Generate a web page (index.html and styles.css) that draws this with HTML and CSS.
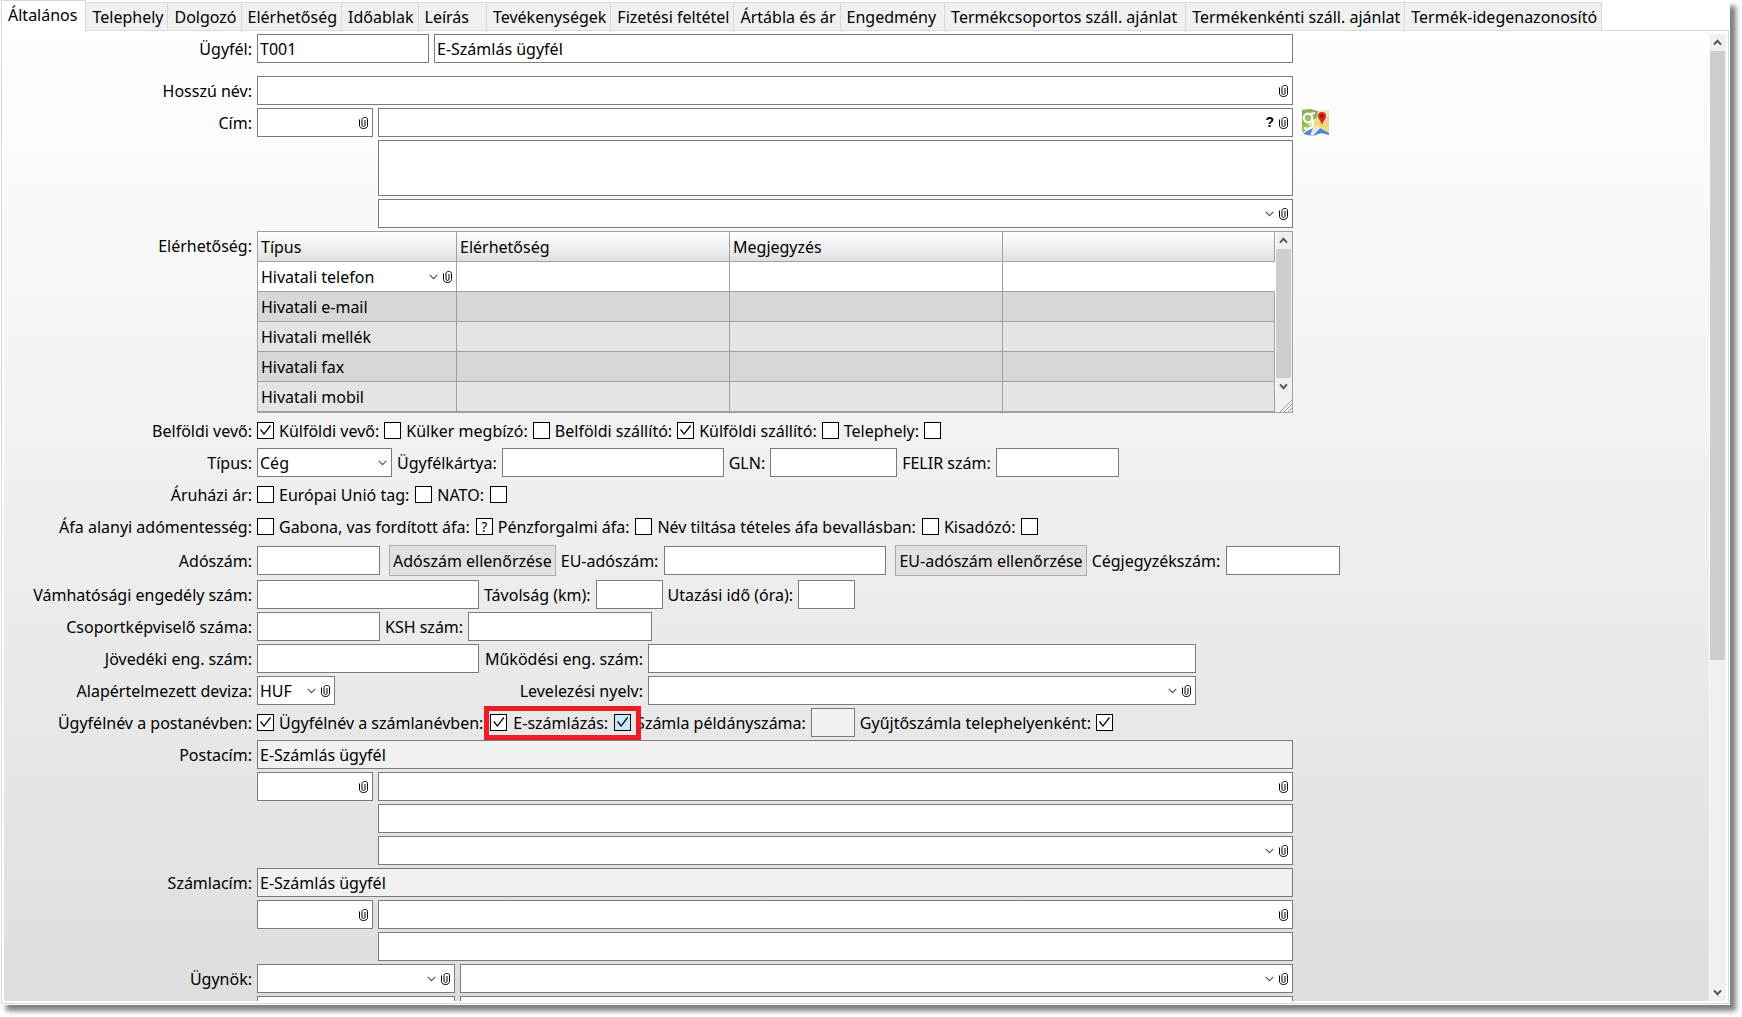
FILE: index.html
```
<!DOCTYPE html>
<html lang="hu">
<head>
    <meta charset="UTF-8">
    <meta name="viewport" content="width=device-width, initial-scale=1.0">
    <title>Ügyfél - E-Számlás ügyfél</title>
    <link rel="stylesheet" href="styles.css">
</head>
<body>
    <!-- Shared icons -->
    <svg class="sprite" aria-hidden="true">
        <symbol id="clip" viewBox="0 0 9 12">
            <path d="M.5 2.500v6c0 4 8 4 8 0v-6c0-2.700-5.500-2.700-5.500 0V8c0 2 3 2 3 0V3" fill="none" stroke="#000"/>
        </symbol>
        <symbol id="chevron" viewBox="0 0 9 6">
            <path d="M.7.9l3.8 3.8L8.3.9" fill="none" stroke="#555" stroke-width="1.2"/>
        </symbol>
        <symbol id="scroll-up" viewBox="0 0 9 7">
            <path d="M1 5.6l3.5-3.8L8 5.6" fill="none" stroke="#555" stroke-width="2"/>
        </symbol>
        <symbol id="scroll-down" viewBox="0 0 9 7">
            <path d="M1 1.4l3.5 3.8L8 1.4" fill="none" stroke="#555" stroke-width="2"/>
        </symbol>
    </svg>

    <div class="window">
        <div class="tabs" role="tablist">
            <button class="tab active" role="tab" aria-selected="true">Általános</button>
            <button class="tab" role="tab">Telephely</button>
            <button class="tab" role="tab">Dolgozó</button>
            <button class="tab" role="tab">Elérhetőség</button>
            <button class="tab" role="tab">Időablak</button>
            <button class="tab tab-wide" role="tab">Leírás</button>
            <button class="tab" role="tab">Tevékenységek</button>
            <button class="tab" role="tab">Fizetési feltétel</button>
            <button class="tab" role="tab">Ártábla és ár</button>
            <button class="tab tab-roomy" role="tab">Engedmény</button>
            <button class="tab tab-roomy" role="tab">Termékcsoportos száll. ajánlat</button>
            <button class="tab" role="tab">Termékenkénti száll. ajánlat</button>
            <button class="tab" role="tab">Termék-idegenazonosító</button>
        </div>

        <div class="panel">
            <form class="form">
                <div class="row row-first">
                    <label for="code">Ügyfél:</label>
                    <div class="controls">
                        <input class="field w172" id="code" type="text" value="T001">
                        <input class="field grow" type="text" value="E-Számlás ügyfél" aria-label="Ügyfél neve">
                    </div>
                </div>

                <div class="row">
                    <label for="long-name">Hosszú név:</label>
                    <div class="controls">
                        <div class="field grow"><input id="long-name" type="text"><svg class="clip"><use href="#clip"/></svg></div>
                    </div>
                </div>

                <div class="row">
                    <label for="zip">Cím:</label>
                    <div class="controls">
                        <div class="field w116"><input id="zip" type="text"><svg class="clip"><use href="#clip"/></svg></div>
                        <div class="field grow"><input type="text" aria-label="Település"><button type="button" class="help">?</button><svg class="clip"><use href="#clip"/></svg></div>
                    </div>
                    <a class="map-link" href="#" aria-label="Térkép">
                        <svg viewBox="0 0 27 27">
                            <path d="M0 1l8-1 8 2 11-1v24l-8-1-8 3-11-3z" fill="#e6e3d6"/>
                            <path d="M0 1l8-1 8 2v11L0 23z" fill="#8cb153"/>
                            <path d="M16 2l11-1v5l-9 7-3-3z" fill="#e3ebbd"/>
                            <path d="M18 13l9-7v15z" fill="#efcdb8"/>
                            <path d="M0 20l14-11 13 11v4H0z" fill="#dfe3e4"/>
                            <path d="M7 19l8-9 12 9v4l-10-6-4 4z" fill="#f0df55"/>
                            <path d="M1 25l9-6 5 3 3-3 9 5v2l-8-2-8 3z" fill="#4f84cf"/>
                            <path d="M11 19l4-3 3 3-7 8-3-1z" fill="#e5e8ea"/>
                            <path d="M0 16l5-2 3 3-6 6-2-1z" fill="#9cc25c"/>
                            <circle cx="6" cy="9" r="4.300" fill="#9bbd63" stroke="#fff" stroke-width="2.200"/>
                            <path d="M8 5l5-1M10 9l1 5c1 5-4 7-9 5" fill="none" stroke="#fff" stroke-width="2"/>
                            <path d="M20 17c0-5-4-6-4-10a4 4 0 0 1 8 0c0 4-4 5-4 10z" fill="#e0261c"/>
                            <circle cx="20" cy="7" r="1.500" fill="#6b0e08"/>
                        </svg>
                    </a>
                </div>

                <div class="row">
                    <div class="controls indent">
                        <textarea class="field grow" aria-label="Cím részletei"></textarea>
                    </div>
                </div>

                <div class="row">
                    <div class="controls indent">
                        <div class="field grow"><select aria-label="Ország"><option></option></select><svg class="chevron"><use href="#chevron"/></svg><svg class="clip"><use href="#clip"/></svg></div>
                    </div>
                </div>

                <div class="row">
                    <label for="contact-type">Elérhetőség:</label>
                    <div class="contacts">
                        <table>
                            <colgroup><col class="col-type"><col class="col-data"><col class="col-data"><col></colgroup>
                            <thead>
                                <tr><th>Típus</th><th>Elérhetőség</th><th>Megjegyzés</th><th></th></tr>
                            </thead>
                            <tbody>
                                <tr class="editing">
                                    <td><div class="cell-edit"><select id="contact-type"><option>Hivatali telefon</option></select><svg class="chevron"><use href="#chevron"/></svg><svg class="clip"><use href="#clip"/></svg></div></td>
                                    <td></td><td></td><td></td>
                                </tr>
                                <tr><td>Hivatali e-mail</td><td></td><td></td><td></td></tr>
                                <tr><td>Hivatali mellék</td><td></td><td></td><td></td></tr>
                                <tr><td>Hivatali fax</td><td></td><td></td><td></td></tr>
                                <tr><td>Hivatali mobil</td><td></td><td></td><td></td></tr>
                            </tbody>
                        </table>
                        <div class="contacts-side">
                            <div class="scrollbar">
                                <svg class="arrow"><use href="#scroll-up"/></svg>
                                <div class="thumb thumb-full"></div>
                                <svg class="arrow"><use href="#scroll-down"/></svg>
                            </div>
                            <svg class="grip" viewBox="0 0 12 12"><path d="M0 12L12 0M4 12l8-8M8 12l4-4" stroke="#a0a0a0"/><path d="M2 12L12 2M6 12l6-6" stroke="#fff"/></svg>
                        </div>
                    </div>
                </div>

                <div class="row">
                    <label for="dom-buyer">Belföldi vevő:</label>
                    <div class="controls">
                        <input type="checkbox" id="dom-buyer" checked>
                        <label for="for-buyer">Külföldi vevő:</label>
                        <input type="checkbox" id="for-buyer">
                        <label for="trade-agent">Külker megbízó:</label>
                        <input type="checkbox" id="trade-agent">
                        <label for="dom-supplier">Belföldi szállító:</label>
                        <input type="checkbox" id="dom-supplier" checked>
                        <label for="for-supplier">Külföldi szállító:</label>
                        <input type="checkbox" id="for-supplier">
                        <label for="site">Telephely:</label>
                        <input type="checkbox" id="site">
                    </div>
                </div>

                <div class="row">
                    <label for="type">Típus:</label>
                    <div class="controls">
                        <div class="field w135"><select id="type"><option>Cég</option></select><svg class="chevron"><use href="#chevron"/></svg></div>
                        <label for="card">Ügyfélkártya:</label>
                        <input class="field w222" type="text" id="card">
                        <label for="gln">GLN:</label>
                        <input class="field w127" type="text" id="gln">
                        <label for="felir">FELIR szám:</label>
                        <input class="field w123" type="text" id="felir">
                    </div>
                </div>

                <div class="row">
                    <label for="store-price">Áruházi ár:</label>
                    <div class="controls loose">
                        <input type="checkbox" id="store-price">
                        <label for="eu-member">Európai Unió tag:</label>
                        <input type="checkbox" id="eu-member">
                        <label for="nato">NATO:</label>
                        <input type="checkbox" id="nato">
                    </div>
                </div>

                <div class="row">
                    <label for="vat-free">Áfa alanyi adómentesség:</label>
                    <div class="controls loose">
                        <input type="checkbox" id="vat-free">
                        <label for="reverse-vat">Gabona, vas fordított áfa:</label>
                        <input type="checkbox" id="reverse-vat" class="unknown">
                        <label for="cash-vat">Pénzforgalmi áfa:</label>
                        <input type="checkbox" id="cash-vat">
                        <label for="hide-name">Név tiltása tételes áfa bevallásban:</label>
                        <input type="checkbox" id="hide-name">
                        <label for="kata">Kisadózó:</label>
                        <input type="checkbox" id="kata">
                    </div>
                </div>

                <div class="row row-tall">
                    <label for="tax-no">Adószám:</label>
                    <div class="controls loose">
                        <input class="field w123" type="text" id="tax-no">
                        <button type="button" class="check-btn">Adószám ellenőrzése</button>
                        <label for="eu-tax-no">EU-adószám:</label>
                        <input class="field w222" type="text" id="eu-tax-no">
                        <button type="button" class="check-btn">EU-adószám ellenőrzése</button>
                        <label for="reg-no">Cégjegyzékszám:</label>
                        <input class="field w114" type="text" id="reg-no">
                    </div>
                </div>

                <div class="row">
                    <label for="customs">Vámhatósági engedély szám:</label>
                    <div class="controls">
                        <input class="field w222" type="text" id="customs">
                        <label for="distance">Távolság (km):</label>
                        <input class="field w67" type="text" id="distance">
                        <label for="travel">Utazási idő (óra):</label>
                        <input class="field w57" type="text" id="travel">
                    </div>
                </div>

                <div class="row">
                    <label for="group-no">Csoportképviselő száma:</label>
                    <div class="controls">
                        <input class="field w123" type="text" id="group-no">
                        <label for="ksh">KSH szám:</label>
                        <input class="field w184" type="text" id="ksh">
                    </div>
                </div>

                <div class="row">
                    <label for="excise">Jövedéki eng. szám:</label>
                    <div class="controls half">
                        <input class="field w222" type="text" id="excise">
                        <label class="mid" for="permit">Működési eng. szám:</label>
                        <input class="field grow" type="text" id="permit">
                    </div>
                </div>

                <div class="row">
                    <label for="currency">Alapértelmezett deviza:</label>
                    <div class="controls half">
                        <div class="w222"><div class="field w78"><select id="currency"><option>HUF</option></select><svg class="chevron"><use href="#chevron"/></svg><svg class="clip"><use href="#clip"/></svg></div></div>
                        <label class="mid" for="language">Levelezési nyelv:</label>
                        <div class="field grow"><select id="language"><option></option></select><svg class="chevron"><use href="#chevron"/></svg><svg class="clip"><use href="#clip"/></svg></div>
                    </div>
                </div>

                <div class="row">
                    <label for="post-name">Ügyfélnév a postanévben:</label>
                    <div class="controls">
                        <input type="checkbox" id="post-name" checked>
                        <label for="invoice-name">Ügyfélnév a számlanévben:</label>
                        <div class="highlight">
                            <input type="checkbox" id="invoice-name" checked>
                            <label for="e-invoice">E-számlázás:</label>
                            <input type="checkbox" id="e-invoice" class="hot" checked>
                        </div>
                        <label for="copies">Számla példányszáma:</label>
                        <input class="field w44" type="text" id="copies" readonly>
                        <label for="collective">Gyűjtőszámla telephelyenként:</label>
                        <input type="checkbox" id="collective" checked>
                    </div>
                </div>

                <div class="row">
                    <label for="post-address">Postacím:</label>
                    <div class="controls">
                        <input class="field grow" type="text" id="post-address" value="E-Számlás ügyfél" readonly>
                    </div>
                </div>
                <div class="row">
                    <div class="controls">
                        <div class="field w116"><input type="text" aria-label="Postacím irányítószám"><svg class="clip"><use href="#clip"/></svg></div>
                        <div class="field grow"><input type="text" aria-label="Postacím település"><svg class="clip"><use href="#clip"/></svg></div>
                    </div>
                </div>
                <div class="row">
                    <div class="controls indent">
                        <input class="field grow" type="text" aria-label="Postacím utca">
                    </div>
                </div>
                <div class="row">
                    <div class="controls indent">
                        <div class="field grow"><select aria-label="Postacím ország"><option></option></select><svg class="chevron"><use href="#chevron"/></svg><svg class="clip"><use href="#clip"/></svg></div>
                    </div>
                </div>

                <div class="row">
                    <label for="bill-address">Számlacím:</label>
                    <div class="controls">
                        <input class="field grow" type="text" id="bill-address" value="E-Számlás ügyfél" readonly>
                    </div>
                </div>
                <div class="row">
                    <div class="controls">
                        <div class="field w116"><input type="text" aria-label="Számlacím irányítószám"><svg class="clip"><use href="#clip"/></svg></div>
                        <div class="field grow"><input type="text" aria-label="Számlacím település"><svg class="clip"><use href="#clip"/></svg></div>
                    </div>
                </div>
                <div class="row">
                    <div class="controls indent">
                        <input class="field grow" type="text" aria-label="Számlacím utca">
                    </div>
                </div>

                <div class="row">
                    <label for="agent">Ügynök:</label>
                    <div class="controls">
                        <div class="field w198"><select id="agent"><option></option></select><svg class="chevron"><use href="#chevron"/></svg><svg class="clip"><use href="#clip"/></svg></div>
                        <div class="field grow"><select aria-label="Ügynök neve"><option></option></select><svg class="chevron"><use href="#chevron"/></svg><svg class="clip"><use href="#clip"/></svg></div>
                    </div>
                </div>
                <div class="row">
                    <div class="controls">
                        <input class="field w198" type="text" aria-label="Második ügynök">
                        <input class="field grow" type="text" aria-label="Második ügynök neve">
                    </div>
                </div>
            </form>

            <div class="scrollbar">
                <svg class="arrow"><use href="#scroll-up"/></svg>
                <div class="thumb"></div>
                <svg class="arrow arrow-end"><use href="#scroll-down"/></svg>
            </div>
        </div>
    </div>
</body>
</html>
```
FILE: styles.css
```
* {
    box-sizing: border-box;
}

body {
    margin: 0;
    height: 100vh;
    overflow: hidden;
    background: #fff;
}

body,
button,
input,
select,
textarea {
    font-family: "Noto Sans", "Segoe UI", sans-serif;
    font-size: 16px;
    color: #000;
}

.sprite {
    display: none;
}

.window {
    display: flex;
    flex-direction: column;
    height: calc(100vh - 12px);
    margin-right: 12px;
    background: #fff;
    box-shadow: 6px 6px 5px rgba(0, 0, 0, 0.5);
}

/* Tabs */
.tabs {
    display: flex;
    align-items: flex-end;
    height: 30px;
    flex: none;
    padding-left: 1px;
}

.tab {
    height: 28px;
    padding: 0 4px 0 6px;
    border: 1px solid #d9d9d9;
    border-width: 1px 1px 0 0;
    background: #f0f0f0;
    line-height: 26px;
    white-space: nowrap;
}

.tab.active {
    height: 31px;
    margin-bottom: -1px;
    padding: 0 8px 3px 6px;
    border-left-width: 1px;
    background: #fff;
    z-index: 1;
}

.tab-wide {
    padding-right: 17px;
}

.tab-roomy {
    padding-right: 8px;
}

.panel {
    display: flex;
    flex: 1;
    min-height: 0;
    margin: 0 1px 1px;
    padding: 3px 2px 2px;
    border: 1px solid #d9d9d9;
}

/* Form */
.form {
    display: flex;
    flex: 1;
    flex-direction: column;
    gap: 3px;
    min-width: 0;
    overflow: hidden;
    padding-left: 2px;
    background: linear-gradient(#fff, #dedede);
}

.row {
    display: grid;
    grid-template-columns: 246px minmax(0, 1036px) auto;
    column-gap: 5px;
    flex: none;
    min-height: 29px;
    line-height: 27px;
}

.row-first {
    margin-bottom: 10px;
}

.row-tall {
    min-height: 33px;
    align-items: center;
}

.row > label {
    text-align: right;
}

label {
    padding-top: 2px;
    white-space: nowrap;
}

.controls {
    display: flex;
    grid-column: 2;
    align-items: center;
    gap: 5px;
}

.loose label {
    padding-right: 1px;
}

.indent {
    padding-left: 121px;
}

.half {
    max-width: 939px;
}

.mid {
    width: 159px;
    text-align: right;
}

.field {
    display: flex;
    align-items: center;
    flex: none;
    height: 29px;
    padding: 0 4px 0 2px;
    border: 1px solid #7a7a7a;
    border-radius: 0;
    background: #fff;
}

.field[readonly] {
    background: #f1f1f1;
}

.field input,
.field select,
.cell-edit select {
    flex: 1;
    min-width: 0;
    height: 27px;
    padding: 0;
    border: 0;
    background: transparent;
    appearance: none;
}

textarea.field {
    height: 56px;
    resize: none;
}

.grow {
    flex: 1;
    min-width: 0;
}

.w44 { width: 44px; }
.w57 { width: 57px; }
.w67 { width: 67px; }
.w78 { width: 78px; }
.w114 { width: 114px; }
.w116 { width: 116px; }
.w123 { width: 123px; }
.w127 { width: 127px; }
.w135 { width: 135px; }
.w172 { width: 172px; }
.w184 { width: 184px; }
.w198 { width: 198px; }
.w222 { width: 222px; }

.clip {
    width: 9px;
    height: 12px;
    flex: none;
    margin-left: 5px;
}

.chevron {
    width: 9px;
    height: 6px;
    flex: none;
}

.help {
    padding: 0;
    border: 0;
    background: transparent;
    font-family: "Liberation Sans", Arial, sans-serif;
    font-size: 14px;
    font-weight: 700;
    line-height: 27px;
}

.map-link {
    height: 27px;
    margin: 1px 0 0 4px;
}

.map-link svg {
    display: block;
    width: 27px;
    height: 27px;
}

.check-btn {
    flex: none;
    height: 31px;
    margin-left: 4px;
    padding: 0 3px;
    border: 1px solid #adadad;
    background: #e1e1e1;
}

/* Checkboxes */
input[type="checkbox"] {
    width: 17px;
    height: 17px;
    flex: none;
    margin: 0;
    border: 1px solid #000;
    background: #fff;
    appearance: none;
}

input[type="checkbox"]:checked::before {
    content: "";
    display: block;
    width: 15px;
    height: 15px;
    background: #000;
    clip-path: polygon(2px 7px, 3px 6px, 6px 10px, 12px 2px, 13px 3px, 6px 12px);
}

input[type="checkbox"].unknown::before {
    content: "?";
    display: block;
    font-size: 14px;
    line-height: 15px;
    text-align: center;
}

input[type="checkbox"].hot {
    background: #cce8ff;
}

.highlight {
    display: flex;
    position: relative;
    align-items: center;
    gap: 6px;
    margin-left: 2px;
}

.highlight::after {
    content: "";
    position: absolute;
    inset: -2px -10px -3px -6px;
    border: 5px solid #ed1c24;
    pointer-events: none;
}

/* Contacts table */
.contacts {
    display: flex;
    border: 1px solid #a0a0a0;
}

.contacts table {
    flex: 1;
    table-layout: fixed;
    border-spacing: 0;
}

.col-type {
    width: 199px;
}

.col-data {
    width: 273px;
}

.contacts th,
.contacts td {
    height: 30px;
    padding: 2px 3px 0;
    border: 1px solid #a0a0a0;
    border-width: 0 1px 1px 0;
    font-weight: 400;
    text-align: left;
}

.contacts th {
    background: linear-gradient(#fff, #e0e0e0);
}

.contacts td {
    background: #e4e4e4;
}

.contacts tr:nth-child(even) td {
    background: #d7d7d7;
}

.contacts .editing td {
    padding: 0 4px 0 3px;
    background: #fff;
}

.contacts .editing td:last-child {
    border-right-color: #fff;
}

.cell-edit {
    display: flex;
    align-items: center;
    height: 29px;
}

.contacts-side {
    display: flex;
    flex-direction: column;
    justify-content: space-between;
    align-items: flex-end;
    width: 17px;
    background: #f0f0f0;
}

.contacts-side .scrollbar {
    height: 163px;
}

.grip {
    width: 12px;
    height: 12px;
}

/* Scrollbars */
.scrollbar {
    display: flex;
    flex-direction: column;
    flex: none;
    width: 17px;
    padding-right: 1px;
    border-left: 1px solid #fff;
    background: #f0f0f0;
}

.arrow {
    width: 9px;
    height: 7px;
    flex: none;
    margin: 5px 3px;
}

.thumb {
    height: 63%;
    background: #cdcdcd;
}

.thumb-full {
    flex: 1;
}

.arrow-end {
    margin-top: auto;
}
```
